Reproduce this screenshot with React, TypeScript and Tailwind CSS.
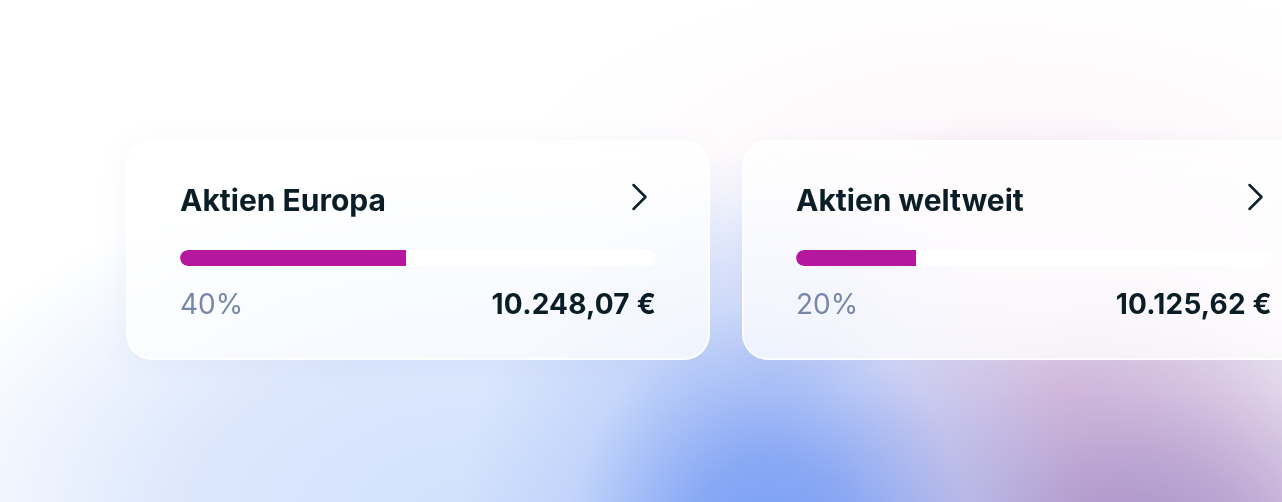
type Holding = {
  name: string
  share: string
  fill: number
  value: string
}

const holdings: Holding[] = [
  { name: 'Aktien Europa', share: '40%', fill: 226, value: '10.248,07 €' },
  { name: 'Aktien weltweit', share: '20%', fill: 120, value: '10.125,62 €' },
]

function Chevron(): JSX.Element {
  return (
    <svg width="28" height="28" viewBox="0 0 28 28" fill="none" className="mt-px shrink-0">
      <path
        d="M5.5 2 L17.5 14 L5.5 26"
        stroke="#0c222c"
        strokeWidth="2.5"
        strokeLinecap="round"
        strokeLinejoin="round"
      />
    </svg>
  )
}

function HoldingCard({ h }: { h: Holding }): JSX.Element {
  return (
    <div className="flex w-[584px] shrink-0 flex-col rounded-[26px] border-2 border-white/80 bg-white/75 px-[52px] pb-9 pt-10 shadow-[0_4px_30px_rgba(120,140,200,0.08)] backdrop-blur-xl">
      <div className="flex h-9 items-start justify-between">
        <h2 className="text-[30px] font-bold leading-9 text-[#0b1d26]">{h.name}</h2>
        <Chevron />
      </div>
      <div className="mt-8 flex h-4 w-full overflow-hidden rounded-full bg-white">
        <div className="h-full rounded-l-full bg-[#b5179e]" style={{ width: h.fill }} />
      </div>
      <div className="mt-5 flex h-9 items-center justify-between">
        <span className="text-[28px] leading-9 text-[#7886a8]">{h.share}</span>
        <span className="text-[28px] font-bold leading-9 tracking-[0.2px] text-[#0b1d26]">{h.value}</span>
      </div>
    </div>
  )
}

export default function App(): JSX.Element {
  return (
    <div
      className="h-[502px] w-full overflow-hidden bg-white bg-[radial-gradient(ellipse_320px_440px_at_770px_590px,#7299f4_0%,rgba(122,158,244,0.85)_30%,rgba(165,190,248,0.4)_65%,rgba(190,210,252,0)_100%),radial-gradient(ellipse_360px_280px_at_1130px_570px,#a088c2_0%,rgba(170,145,200,0.75)_40%,rgba(215,195,225,0)_100%),radial-gradient(ellipse_420px_280px_at_1060px_390px,rgba(232,205,230,0.9)_0%,rgba(240,222,238,0.45)_50%,rgba(252,240,246,0)_100%),radial-gradient(ellipse_600px_360px_at_480px_520px,#d1e0fc_0%,rgba(212,226,252,0.8)_50%,rgba(255,255,255,0)_100%),radial-gradient(ellipse_480px_200px_at_1000px_170px,rgba(252,238,245,0.55)_0%,rgba(255,255,255,0)_100%)]"
      style={{ fontFamily: 'Inter, "Noto Sans", sans-serif' }}
    >
      <div className="flex gap-8 pl-[126px] pt-[140px]">
        {holdings.map((h) => (
          <HoldingCard key={h.name} h={h} />
        ))}
      </div>
    </div>
  )
}
